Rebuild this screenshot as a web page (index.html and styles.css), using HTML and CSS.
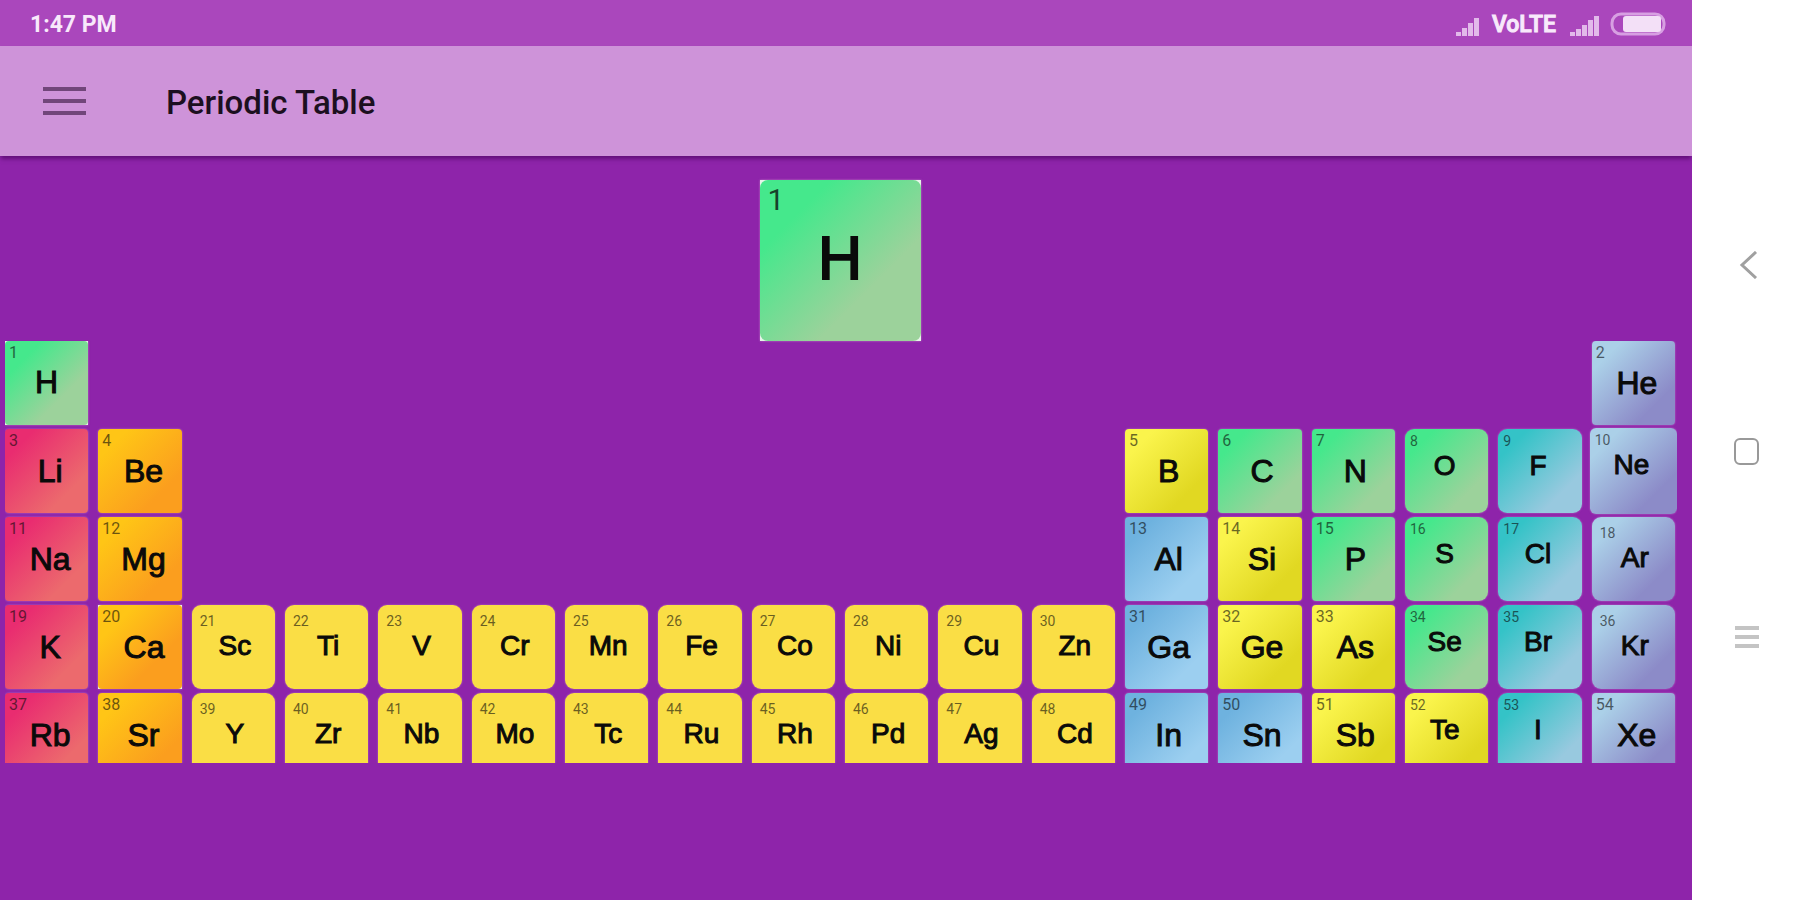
FILE: index.html
```html
<!DOCTYPE html>
<html lang="en">
<head>
<meta charset="utf-8">
<title>Periodic Table</title>
<link rel="stylesheet" href="styles.css">
</head>
<body>
<div class="app">
  <div class="status">
    <span class="time">1:47 PM</span>
    <div class="indicators">
      <svg class="signal" width="24" height="20" viewBox="0 0 24 20"><path d="M0 16h5v4H0zM6 12h5v8H6zM12 7h5v13h-5zM18 2h5v18h-5z"/></svg>
      <span class="network">VoLTE</span>
      <svg class="signal wide" width="30" height="20" viewBox="0 0 30 20"><path d="M0 16h5v4H0zM6 13h5v7H6zM12 9h5v11h-5zM18 4h5v16h-5zM24 0h5v20h-5z"/></svg>
      <svg width="56" height="24" viewBox="0 0 56 24"><rect x="2" y="2" width="52" height="20" rx="9" fill="none" stroke="#d79fe2" stroke-width="3"/><rect x="13" y="4" width="38" height="16" rx="3" fill="#f3e0f7"/></svg>
    </div>
  </div>
  <header class="bar">
    <button class="menu" type="button" aria-label="Open menu"><svg width="44" height="32" viewBox="0 0 44 32"><path d="M1 4h43M1 16h43M1 28h43"/></svg></button>
    <h1>Periodic Table</h1>
  </header>
  <main>
    <div class="featured"><div class="tile nonmetal square"><span class="num">1</span><span class="sym">H</span></div></div>
    <div class="grid">
      <button class="tile nonmetal square"><span class="num">1</span><span class="sym">H</span></button>
      <button class="tile noble c18"><span class="num">2</span><span class="sym">He</span></button>

      <button class="tile alkali"><span class="num">3</span><span class="sym">Li</span></button>
      <button class="tile alkaline"><span class="num">4</span><span class="sym">Be</span></button>
      <button class="tile metalloid c13"><span class="num">5</span><span class="sym">B</span></button>
      <button class="tile nonmetal"><span class="num">6</span><span class="sym">C</span></button>
      <button class="tile nonmetal"><span class="num">7</span><span class="sym">N</span></button>
      <button class="tile nonmetal raised"><span class="num">8</span><span class="sym">O</span></button>
      <button class="tile halogen raised"><span class="num">9</span><span class="sym">F</span></button>
      <button class="tile noble raised grown"><span class="num">10</span><span class="sym">Ne</span></button>

      <button class="tile alkali"><span class="num">11</span><span class="sym">Na</span></button>
      <button class="tile alkaline"><span class="num">12</span><span class="sym">Mg</span></button>
      <button class="tile post c13"><span class="num">13</span><span class="sym">Al</span></button>
      <button class="tile metalloid"><span class="num">14</span><span class="sym">Si</span></button>
      <button class="tile nonmetal"><span class="num">15</span><span class="sym">P</span></button>
      <button class="tile nonmetal raised"><span class="num">16</span><span class="sym">S</span></button>
      <button class="tile halogen raised"><span class="num">17</span><span class="sym">Cl</span></button>
      <button class="tile noble small"><span class="num">18</span><span class="sym">Ar</span></button>

      <button class="tile alkali"><span class="num">19</span><span class="sym">K</span></button>
      <button class="tile alkaline square"><span class="num">20</span><span class="sym">Ca</span></button>
      <button class="tile transition"><span class="num">21</span><span class="sym">Sc</span></button>
      <button class="tile transition"><span class="num">22</span><span class="sym">Ti</span></button>
      <button class="tile transition"><span class="num">23</span><span class="sym">V</span></button>
      <button class="tile transition"><span class="num">24</span><span class="sym">Cr</span></button>
      <button class="tile transition"><span class="num">25</span><span class="sym">Mn</span></button>
      <button class="tile transition"><span class="num">26</span><span class="sym">Fe</span></button>
      <button class="tile transition"><span class="num">27</span><span class="sym">Co</span></button>
      <button class="tile transition"><span class="num">28</span><span class="sym">Ni</span></button>
      <button class="tile transition"><span class="num">29</span><span class="sym">Cu</span></button>
      <button class="tile transition"><span class="num">30</span><span class="sym">Zn</span></button>
      <button class="tile post"><span class="num">31</span><span class="sym">Ga</span></button>
      <button class="tile metalloid"><span class="num">32</span><span class="sym">Ge</span></button>
      <button class="tile metalloid"><span class="num">33</span><span class="sym">As</span></button>
      <button class="tile nonmetal raised"><span class="num">34</span><span class="sym">Se</span></button>
      <button class="tile halogen raised"><span class="num">35</span><span class="sym">Br</span></button>
      <button class="tile noble small"><span class="num">36</span><span class="sym">Kr</span></button>

      <button class="tile alkali"><span class="num">37</span><span class="sym">Rb</span></button>
      <button class="tile alkaline"><span class="num">38</span><span class="sym">Sr</span></button>
      <button class="tile transition"><span class="num">39</span><span class="sym">Y</span></button>
      <button class="tile transition"><span class="num">40</span><span class="sym">Zr</span></button>
      <button class="tile transition"><span class="num">41</span><span class="sym">Nb</span></button>
      <button class="tile transition"><span class="num">42</span><span class="sym">Mo</span></button>
      <button class="tile transition"><span class="num">43</span><span class="sym">Tc</span></button>
      <button class="tile transition"><span class="num">44</span><span class="sym">Ru</span></button>
      <button class="tile transition"><span class="num">45</span><span class="sym">Rh</span></button>
      <button class="tile transition"><span class="num">46</span><span class="sym">Pd</span></button>
      <button class="tile transition"><span class="num">47</span><span class="sym">Ag</span></button>
      <button class="tile transition"><span class="num">48</span><span class="sym">Cd</span></button>
      <button class="tile post"><span class="num">49</span><span class="sym">In</span></button>
      <button class="tile post"><span class="num">50</span><span class="sym">Sn</span></button>
      <button class="tile metalloid"><span class="num">51</span><span class="sym">Sb</span></button>
      <button class="tile metalloid raised"><span class="num">52</span><span class="sym">Te</span></button>
      <button class="tile halogen raised"><span class="num">53</span><span class="sym">I</span></button>
      <button class="tile noble"><span class="num">54</span><span class="sym">Xe</span></button>
    </div>
  </main>
</div>
<nav class="keys" aria-label="System">
  <button type="button" aria-label="Back"><svg width="28" height="28" viewBox="0 0 28 28"><path d="M24 1L10 14l14 13" stroke="#a0a0a0" stroke-width="3"/></svg></button>
  <button type="button" aria-label="Home"><svg width="28" height="28" viewBox="0 0 28 28"><rect x="3" y="2" width="23" height="25" rx="5" stroke="#999" stroke-width="2"/></svg></button>
  <button type="button" aria-label="Recent apps"><svg width="28" height="28" viewBox="0 0 28 28"><path d="M3 5h24M3 14h24M3 23h24" stroke="#c4c4c4" stroke-width="4"/></svg></button>
</nav>
</body>
</html>
```
FILE: styles.css
```css
* { box-sizing: border-box; }
body {
  margin: 0;
  min-height: 100vh;
  display: flex;
  background: #fff;
  font-family: "Liberation Sans", Arial, sans-serif;
}
button { border: 0; padding: 0; margin: 0; background: none; font: inherit; color: inherit; }
svg { display: block; }

.app { flex: 1; display: flex; flex-direction: column; background: #8e24aa; }

.status {
  height: 46px;
  padding: 2px 26px 0 30px;
  display: flex;
  align-items: center;
  justify-content: space-between;
  background: #aa47bc;
  color: #f8e9fb;
  font-family: Roboto, sans-serif;
  font-size: 23px;
  font-weight: 700;
}
.indicators { display: flex; align-items: center; }
.network { margin: 0 14px 0 12px; font-weight: 500; -webkit-text-stroke: 1px currentColor; }
.signal { fill: #e2b9ea; margin-top: 3px; }
.signal.wide { margin-right: 10px; }

.bar {
  height: 110px;
  padding-left: 42px;
  display: flex;
  align-items: center;
  gap: 80px;
  background: #ce93d9;
  box-shadow: 0 4px 4px -1px rgba(70, 0, 90, 0.6);
}
.menu svg { margin-bottom: 1px; stroke: #71467a; stroke-width: 4; }
.bar h1 {
  margin: 3px 0 0;
  color: #1c0f20;
  font-family: Roboto, sans-serif;
  font-size: 33px;
  font-weight: 500;
}

main { padding: 24px 15px 0 5px; }
.featured { display: flex; justify-content: center; padding-right: 2px; }
.featured .tile { width: 161px; height: 161px; }
.grid {
  display: grid;
  grid-template-columns: repeat(18, 1fr);
  grid-template-rows: repeat(4, 84px) 70px;
  gap: 4px 10px;
  height: 422px;
  padding-right: 2px;
  overflow: hidden;
}
.c13 { grid-column: 13; }
.c18 { grid-column: 18; }

.tile {
  position: relative;
  height: 84px;
  padding: 24px 0 0 4px;
  border-radius: 4px;
  background: linear-gradient(135deg, var(--from) 18%, var(--to) 76%);
  color: #0a0a0a;
  text-align: center;
  box-shadow: 0 0 2px rgba(235, 200, 225, 0.5);
}
.grid .tile { display: flex; justify-content: center; align-items: flex-start; }
.num {
  position: absolute;
  top: 3px;
  left: 4px;
  font-family: Roboto, sans-serif;
  font-size: 16px;
  line-height: 18px;
  opacity: 0.6;
}
.sym { font-size: 32px; line-height: 36px; -webkit-text-stroke: 1px currentColor; }

.nonmetal { --from: #45e88c; --to: #9cd29b; }
.alkali { --from: #e92c70; --to: #ec6a6d; }
.alkaline { --from: #ffc516; --to: #fb9e1e; }
.transition { --from: #fade45; --to: #fade45; }
.metalloid { --from: #faf44c; --to: #e1d822; }
.post { --from: #6eb2df; --to: #9ccff0; }
.halogen { --from: #34c3c7; --to: #98c9df; }
.noble { --from: #abd0e8; --to: #8c8bc8; }

.alkali, .alkaline, .noble { padding-left: 7px; }

.transition, .small, .raised { padding: 24px 0 0 3px; border-radius: 9px; }
.transition .sym, .small .sym, .raised .sym { font-size: 28px; line-height: 34px; }
.transition .num, .small .num, .raised .num { top: 7px; left: 8px; font-size: 14px; }
.raised { padding: 20px 4px 0 0; }
.raised .num { top: 3px; left: 5px; }
.grown { height: 86px; margin: -1px -2px; border-radius: 6px; }

.square {
  isolation: isolate;
  padding: 23px 0 0;
  border-radius: 0;
  background: #e8f3ea;
}
.square.alkaline { padding: 24px 0 0 8px; }
.square::before {
  content: "";
  position: absolute;
  inset: 0;
  z-index: -1;
  border-radius: 4px;
  background: linear-gradient(135deg, var(--from) 22%, var(--to) 68%);
}

.featured .square { padding: 44px 0 0; }
.featured .square::before { border-radius: 8px; }
.featured .num { top: 2px; left: 8px; font-size: 30px; line-height: 36px; opacity: 0.75; }
.featured .sym { font-size: 61px; line-height: 68px; -webkit-text-stroke-width: 2px; }

.keys {
  width: 108px;
  display: flex;
  flex-direction: column;
  align-items: center;
  justify-content: center;
  gap: 158px;
  padding-top: 2px;
  background: #fff;
}
.keys svg { fill: none; }
```
